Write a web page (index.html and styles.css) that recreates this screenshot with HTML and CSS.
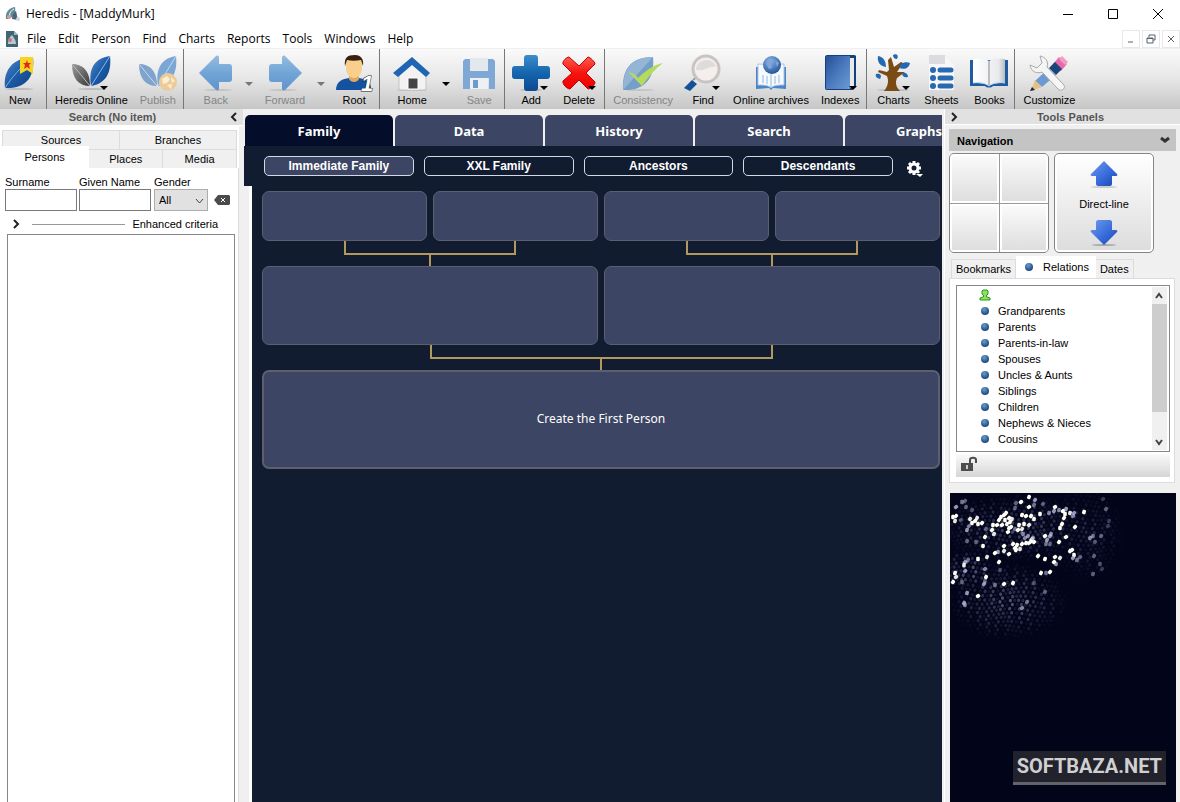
FILE: index.html
```html
<!DOCTYPE html>
<html lang="en">
<head>
    <meta charset="UTF-8">
    <meta name="viewport" content="width=device-width, initial-scale=1.0">
    <title>Heredis - [MaddyMurk]</title>
    <link rel="stylesheet" href="styles.css">
</head>
<body>
    <!-- shared gradients and shapes -->
    <svg class="defs" width="0" height="0">
        <defs>
            <linearGradient id="blue" x1="0" y1="0" x2="1" y2="1"><stop offset="0" stop-color="#4f8ccb"/><stop offset=".5" stop-color="#1d5ba6"/><stop offset="1" stop-color="#0d3f80"/></linearGradient>
            <linearGradient id="book" x1="0" y1="0" x2="1" y2="1"><stop offset="0" stop-color="#284f94"/><stop offset=".5" stop-color="#4a79bd"/><stop offset="1" stop-color="#6d9ad4"/></linearGradient>
            <linearGradient id="arrow" x1="0" y1="0" x2="0" y2="1"><stop offset="0" stop-color="#94bce2"/><stop offset=".5" stop-color="#72a5d6"/><stop offset="1" stop-color="#5f94cb"/></linearGradient>
            <linearGradient id="grey" x1="0" y1="0" x2="1" y2="1"><stop offset="0" stop-color="#9b9b9b"/><stop offset="1" stop-color="#3a3a3a"/></linearGradient>
            <linearGradient id="red" x1="0" y1="0" x2="0" y2="1"><stop offset="0" stop-color="#ff5a50"/><stop offset=".5" stop-color="#f5150f"/><stop offset="1" stop-color="#e00"/></linearGradient>
            <linearGradient id="plus" x1="0" y1="0" x2="0" y2="1"><stop offset="0" stop-color="#3d8ccb"/><stop offset=".5" stop-color="#1565ae"/><stop offset="1" stop-color="#0a4a90"/></linearGradient>
            <linearGradient id="paper" x1="0" y1="0" x2="1" y2="0"><stop offset="0" stop-color="#fff"/><stop offset=".8" stop-color="#e8eaec"/><stop offset="1" stop-color="#b9bdc2"/></linearGradient>
            <linearGradient id="nav" x1="0" y1="0" x2="1" y2="1"><stop offset="0" stop-color="#6f9cf0"/><stop offset=".6" stop-color="#3468d8"/><stop offset="1" stop-color="#1c44a8"/></linearGradient>
            <radialGradient id="globe" cx=".4" cy=".3" r=".8"><stop offset="0" stop-color="#8fb6ea"/><stop offset="1" stop-color="#14488f"/></radialGradient>
        </defs>
    </svg>

    <header class="titlebar">
        <svg class="app-icon" viewBox="0 0 16 16"><path d="M1 13C0 7 3 2 10 1c1 6-1 10-7 12z" fill="#5f8f95"/><path d="M5 12c-1-4 0-7 4-9" stroke="#fff" fill="none"/><path d="M7 13c0-4 2-7 4-8l2 9z" fill="#4b6479"/><circle cx="4" cy="11" r="2" fill="#d79b9b"/><circle cx="13" cy="13" r="2" fill="#cdd9dd"/></svg>
        <h1 class="title">Heredis - [MaddyMurk]</h1>
        <div class="window-controls">
            <button aria-label="Minimize"><svg viewBox="0 0 12 12"><path d="M1 6.500h10"/></svg></button>
            <button aria-label="Maximize"><svg viewBox="0 0 12 12"><path d="M1.500 1.500h9v9h-9z"/></svg></button>
            <button aria-label="Close"><svg viewBox="0 0 12 12"><path d="M1 1l10 10M11 1L1 11"/></svg></button>
        </div>
    </header>

    <nav class="menubar">
        <svg class="doc-icon" viewBox="0 0 14 16"><path d="M1 0h8l4 4v12H1z" fill="#3f6672"/><path d="M9 0l4 4H9z" fill="#9dbcc0"/><path d="M3 13c0-4 1-7 4-9 2 3 4 5 4 9z" fill="#b9c7d3"/><circle cx="5" cy="9" r="2" fill="#cf7b7b"/></svg>
        <button>File</button>
        <button>Edit</button>
        <button>Person</button>
        <button>Find</button>
        <button>Charts</button>
        <button>Reports</button>
        <button>Tools</button>
        <button>Windows</button>
        <button>Help</button>
        <div class="mdi-controls">
            <button aria-label="Minimize document"><svg viewBox="0 0 10 10"><path d="M2 8h5"/></svg></button>
            <button aria-label="Restore document"><svg viewBox="0 0 10 10"><path d="M3 3V1h6v5H7M1 4h6v5H1zM1 4.500h6"/></svg></button>
            <button aria-label="Close document"><svg viewBox="0 0 10 10"><path d="M2 2l6 6M8 2L2 8"/></svg></button>
        </div>
    </nav>

    <div class="toolbar">
        <div class="group group-first">
            <button class="tool">
                <svg viewBox="0 0 36 36"><ellipse cx="17" cy="34" rx="14" ry="1" fill="#bbb"/><path d="M3 33C1 17 9 3 31 2c2 19-6 32-28 31z" fill="url(#blue)"/><path d="M3 33C10 22 18 13 31 2" stroke="#7fb0e0" fill="none"/><path d="M18 2h13v17l-6-4-7 4z" fill="#f8d51c"/><path d="M25 5l1 3h3l-2 2 1 4-3-2-3 2 1-4-2-2h3z" fill="#e0262c"/></svg>
                New
            </button>
        </div>
        <div class="group">
            <button class="tool">
                <svg viewBox="0 0 36 36"><ellipse cx="19" cy="34" rx="14" ry="1" fill="#bbb"/><path d="M-1 9c10 0 18 6 18 22C6 31-1 24-1 9z" fill="url(#grey)"/><path d="M-1 9l18 22" stroke="#bbb"/><path d="M18 31C15 13 22 3 37 1c2 17-5 28-19 30z" fill="url(#blue)"/><path d="M18 31L37 1" stroke="#8cb9e6"/></svg>
                Heredis Online
                <i class="caret caret-over"></i>
            </button>
            <button class="tool" disabled>
                <svg viewBox="0 0 36 36"><path d="M-1 9c10 0 18 6 18 22C6 31-1 24-1 9z" fill="#7fa3cc"/><path d="M-1 9l18 22" stroke="#c5d8ec"/><path d="M18 31C15 13 22 3 36 1c2 17-5 28-18 30z" fill="#7ba7d5"/><path d="M18 31L36 1" stroke="#c5d8ec"/><circle cx="28" cy="27" r="9" fill="#eccb98"/><path d="M22 24l5-3 3 3-3 4-4 1zM31 22l4 4-3 2zM27 30l5-1-1 5z" fill="#f9edd5"/></svg>
                Publish
            </button>
        </div>
        <div class="group group-wide">
            <button class="tool" disabled>
                <svg viewBox="0 0 36 36"><ellipse cx="20" cy="35" rx="14" ry="1" fill="#c4c4c4"/><path d="M1 18L18 1c2-1 3 0 3 2v6h10c2 0 3 1 3 3v12c0 2-1 3-3 3H21v6c0 2-1 3-3 2z" fill="url(#arrow)"/></svg>
                Back
            </button>
            <button class="drop" aria-label="Back history" disabled><i class="caret"></i></button>
            <button class="tool" disabled>
                <svg viewBox="0 0 36 36"><ellipse cx="16" cy="35" rx="14" ry="1" fill="#c4c4c4"/><path d="M35 18L18 1c-2-1-3 0-3 2v6H5c-2 0-3 1-3 3v12c0 2 1 3 3 3h10v6c0 2 1 3 3 2z" fill="url(#arrow)"/></svg>
                Forward
            </button>
            <button class="drop" aria-label="Forward history" disabled><i class="caret"></i></button>
            <button class="tool">
                <svg viewBox="0 0 36 36"><path d="M0 35c0-9 7-11 13-12h10c7 1 13 4 12 12z" fill="#1452a0"/><path d="M13 18h10v6c-2 4-8 4-10 0z" fill="#e0a95e"/><path d="M10 6c0-4 16-4 16 0v7c0 6-4 10-8 10s-8-4-8-10z" fill="#f9cf8c"/><path d="M9 11C8 3 11 0 19 0c6 0 9 4 8 11l-2-6c-5 1-10 1-14 0z" fill="#3a2010"/><text x="25" y="36" class="root-number">1</text></svg>
                Root
            </button>
        </div>
        <div class="group group-wide">
            <button class="tool">
                <svg viewBox="0 0 36 36"><ellipse cx="18" cy="35" rx="15" ry="1" fill="#bbb"/><path d="M5 18L18 7l14 11v14c0 2-1 3-3 3H8c-2 0-3-1-3-3z" fill="#f2f2f2" stroke="#c6c6c6"/><path d="M14 23h10v11H14z" fill="#444" stroke="#fff"/><path d="M18 2L36 18l-4 4L18 10 4 22l-5-4z" fill="#1f65b3"/></svg>
                Home
            </button>
            <button class="drop" aria-label="Home pages"><i class="caret"></i></button>
            <button class="tool" disabled>
                <svg viewBox="0 0 36 36"><path d="M2 6l2-2h5v12h18V4h5l2 2v28h-6V23H9v11H2z" fill="#7fa9d4"/><path d="M9 3h18v13H9z" fill="#e3e8ee"/><path d="M9 23h18v11H9z" fill="#edf1f5"/><path d="M12 25h5v8h-5z" fill="#6d9aca"/></svg>
                Save
            </button>
        </div>
        <div class="group">
            <button class="tool">
                <svg viewBox="0 0 36 36"><ellipse cx="18" cy="35" rx="11" ry="1" fill="#bbb"/><path d="M14 0h8c2 0 3 1 3 3v8h9c2 0 3 1 3 3v7c0 2-1 3-3 3h-9v9c0 2-1 3-3 3h-8c-2 0-3-1-3-3v-9H2c-2 0-3-1-3-3v-7c0-2 1-3 3-3h9V3c0-2 1-3 3-3z" fill="url(#plus)"/></svg>
                Add
                <i class="caret caret-over"></i>
            </button>
            <button class="tool">
                <svg viewBox="0 0 36 36"><path d="M8 2l10 9 9-9c2 0 7 5 7 7l-9 9 9 9c0 3-4 7-7 7l-9-9-9 9c-3 0-8-5-7-8l9-8-9-9C1 6 6 2 8 2z" fill="url(#red)" stroke="#c40000"/></svg>
                Delete
                <i class="caret caret-over"></i>
            </button>
        </div>
        <div class="group">
            <button class="tool" disabled>
                <svg viewBox="0 0 36 36"><ellipse cx="15" cy="35" rx="14" ry="1" fill="#c4c4c4"/><path d="M-2 35C-3 16 4 2 28 2c2 20-7 34-30 33z" fill="#759fc9"/><path d="M-2 35L28 2C8 2-2 12-2 35z" fill="#95b5d4"/><path d="M4 18c3-1 6 1 9 5C19 17 28 10 38 8 30 14 23 22 17 31 12 26 9 22 4 18z" fill="#b6da5c"/></svg>
                Consistency
            </button>
            <button class="tool">
                <svg viewBox="0 0 36 36"><path d="M7 25l5 4-7 7-6-3z" fill="#155098"/><path d="M8 25l6-5" stroke="#999" stroke-width="2"/><circle cx="21" cy="14" r="13" fill="#f4efed" stroke="#c9c3c1" stroke-width="3"/><path d="M11 15c0-11 17-14 20-3-7-2-12 5-20 3z" fill="#dedbdc"/></svg>
                Find
                <i class="caret caret-over"></i>
            </button>
            <button class="tool">
                <svg viewBox="0 0 36 36"><path d="M3 12h30v22l-13-1-2 2-2-2-13 1z" fill="#4c85c6"/><path d="M5 9c6 0 10 1 13 4 3-3 7-4 13-4v21c-6 0-10 0-13 3-3-3-7-3-13-3z" fill="#f7fafd" stroke="#a9c6e6"/><path d="M18 13v20M10 20v8M14 21v8M22 21v8M26 20v8" stroke="#91b6df"/><circle cx="19" cy="10" r="9" fill="url(#globe)"/><path d="M13 8l5-4 3 2-3 3 1 4-3 1zM22 5l4 3-2 4z" fill="#7ea6d8"/></svg>
                Online archives
            </button>
            <button class="tool">
                <svg viewBox="0 0 36 36"><path d="M5 0h27c2 0 2 1 2 2v30l-4 3H5c-2 0-2-1-2-3V2c0-1 1-2 2-2z" fill="#173f80"/><path d="M28 3h4v28l-4 2z" fill="#e9e9e9"/><path d="M4 1h24v33H4z" fill="url(#book)"/></svg>
                Indexes
                <i class="caret caret-over"></i>
            </button>
        </div>
        <div class="group">
            <button class="tool">
                <svg viewBox="0 0 36 36"><ellipse cx="18" cy="35" rx="16" ry="1" fill="#bbb"/><path d="M9 36c4-5 5-10 3-15L3 17l1-2 8 2 2-2-1-10 3-3 3 10 7-5 2 1-6 9 8 0-8 6c-2 5-1 9 3 13z" fill="#7a4b12"/><path d="M3 1c6 1 8 6 8 11C5 11 2 7 3 1zM35 8c-1 5-5 7-11 5 1-5 6-7 11-5zM18 0c4-2 6 1 4 4-3 0-4-2-4-4zM1 19c5-1 6 2 4 5-3-1-5-2-4-5zM27 18c4-1 6 1 6 4-4 1-6-1-6-4z" fill="#2367b5"/></svg>
                Charts
                <i class="caret caret-over"></i>
            </button>
            <button class="tool">
                <svg viewBox="0 0 36 36"><path d="M6 0h16l9 9v26H6z" fill="#f7f7f9"/><path d="M6 0h16l9 9H6z" fill="#dcdce0"/><path d="M22 0l9 9h-9z" fill="#f7f7f9"/><circle cx="10" cy="15" r="3" fill="#2869b0"/><circle cx="10" cy="23" r="3" fill="#2869b0"/><circle cx="10" cy="31" r="3" fill="#2869b0"/><path d="M17 15h11M17 23h11M17 31h11" stroke="#2869b0" stroke-width="5" stroke-linecap="round"/></svg>
                Sheets
            </button>
            <button class="tool">
                <svg viewBox="0 0 36 36"><path d="M-1 5h38v26H22c-2 2-6 2-8 0H-1z" fill="#1f5c9f"/><path d="M2 4c7-1 12-1 16 2 4-3 9-3 16-2v24c-7 0-12 0-16 3-4-3-9-3-16-3z" fill="url(#paper)"/><path d="M18 6v25" stroke="#888"/><path d="M2 28c7-1 12 0 16 3 4-3 9-4 16-3" stroke="#b7d1ec" fill="none"/></svg>
                Books
            </button>
        </div>
        <div class="group">
            <button class="tool">
                <svg viewBox="0 0 36 36"><path d="M28 2l8 7-6 7-8-7z" fill="#e96aa8"/><path d="M31 1l6 6-3 3-6-6z" fill="#f49ac4"/><path d="M24 7l7 7-6 6-7-7z" fill="#1b4479"/><path d="M18 13l7 7-14 12-7-6z" fill="#6b9ad3"/><path d="M4 25l7 7-11 4z" fill="#e4bf86"/><path d="M1 32l3 3-5 1z" fill="#222"/><path d="M9 1c5 1 9 5 7 11l17 18c2 4-3 7-6 4L11 17C6 19 0 17-1 10l7 3 5-5z" fill="#f5f5f5" stroke="#a9a9a9"/></svg>
                Customize
            </button>
        </div>
    </div>

    <div class="workspace">
        <aside class="search-panel">
            <div class="panel-header">
                <h2>Search (No item)</h2>
                <button class="chevron" aria-label="Collapse search"><svg viewBox="0 0 8 10"><path d="M6 1L2 5l4 4"/></svg></button>
            </div>
            <div class="tab-row tab-row-back">
                <button class="tab">Sources</button>
                <button class="tab">Branches</button>
            </div>
            <div class="tab-row">
                <button class="tab tab-active">Persons</button>
                <button class="tab">Places</button>
                <button class="tab">Media</button>
            </div>
            <div class="search-body">
                <form class="fields">
                    <div class="field">
                        <label for="surname">Surname</label>
                        <input type="text" id="surname">
                    </div>
                    <div class="field">
                        <label for="given">Given Name</label>
                        <input type="text" id="given">
                    </div>
                    <div class="field field-gender">
                        <label for="gender">Gender</label>
                        <div class="select-box">
                            <select id="gender"><option>All</option></select>
                            <svg viewBox="0 0 9 6"><path d="M1 1l3.500 4L8 1"/></svg>
                        </div>
                    </div>
                    <button type="reset" class="clear" aria-label="Clear"><svg viewBox="0 0 16 12"><path d="M0 6l4-5h11l1 1v8l-1 1H4z" fill="#4b4b4b"/><path d="M7 4l4 4M11 4L7 8" stroke="#fff"/></svg></button>
                </form>
                <div class="enhanced">
                    <button class="chevron" aria-label="Show enhanced criteria"><svg viewBox="0 0 8 10"><path d="M2 1l4 4-4 4"/></svg></button>
                    <span class="rule"></span>
                    <span>Enhanced criteria</span>
                </div>
                <div class="results"></div>
            </div>
        </aside>

        <main class="center">
            <div class="main-tabs">
                <button class="main-tab main-tab-active">Family</button>
                <button class="main-tab">Data</button>
                <button class="main-tab">History</button>
                <button class="main-tab">Search</button>
                <button class="main-tab">Graphs</button>
            </div>
            <div class="view-bar">
                <button class="view view-active">Immediate Family</button>
                <button class="view">XXL Family</button>
                <button class="view">Ancestors</button>
                <button class="view">Descendants</button>
                <button class="gear" aria-label="View options">
                    <svg viewBox="0 0 18 18"><circle cx="7" cy="7" r="4" fill="none" stroke="#fff" stroke-width="3"/><path d="M7 0v3M7 11v3M0 7h3M11 7h3M2 2l2 2M10 10l2 2M2 12l2-2M10 4l2-2" stroke="#fff" stroke-width="3"/><path d="M9 13h7l-3 3z" fill="#fff" stroke="#121c31" stroke-width="1" paint-order="stroke"/></svg>
                </button>
            </div>
            <div class="tree">
                <div class="couples">
                    <div class="branch">
                        <div class="couple">
                            <div class="card card-small"></div>
                            <div class="card card-small"></div>
                        </div>
                        <div class="link"></div>
                        <div class="stem"></div>
                        <div class="card card-medium"></div>
                    </div>
                    <div class="branch">
                        <div class="couple">
                            <div class="card card-small"></div>
                            <div class="card card-small"></div>
                        </div>
                        <div class="link"></div>
                        <div class="stem"></div>
                        <div class="card card-medium"></div>
                    </div>
                </div>
                <div class="link"></div>
                <div class="stem"></div>
                <button class="card card-root">Create the First Person</button>
            </div>
        </main>

        <aside class="tools-panel">
            <div class="panel-header">
                <button class="chevron" aria-label="Collapse tools"><svg viewBox="0 0 8 10"><path d="M2 1l4 4-4 4"/></svg></button>
                <h2>Tools Panels</h2>
            </div>
            <div class="tools-body">
                <div class="section-title">
                    <h3>Navigation</h3>
                    <svg viewBox="0 0 10 8"><path d="M1 2l4 3 4-3"/></svg>
                </div>
                <div class="pads">
                    <div class="pad pad-grid">
                        <span></span><span></span><span></span><span></span>
                    </div>
                    <div class="pad pad-line">
                        <button aria-label="Up"><svg viewBox="0 0 28 28"><ellipse cx="14" cy="27" rx="13" ry="1" fill="#ccc"/><path d="M14 1l13 13c1 1 0 2-1 2h-4v8c0 1-1 2-2 2H8c-1 0-2-1-2-2v-8H2c-1 0-2-1-1-2z" fill="url(#nav)"/></svg></button>
                        <span>Direct-line</span>
                        <button aria-label="Down"><svg viewBox="0 0 28 28"><ellipse cx="14" cy="26" rx="12" ry="1" fill="#aaa"/><path d="M14 26L1 13c-1-1 0-2 1-2h4V3c0-1 1-2 2-2h12c1 0 2 1 2 2v8h4c1 0 2 1 1 2z" fill="url(#nav)"/></svg></button>
                    </div>
                </div>
                <div class="tab-row tools-tabs">
                    <button class="tab">Bookmarks</button>
                    <button class="tab tab-active"><i class="dot"></i>Relations</button>
                    <button class="tab">Dates</button>
                </div>
                <div class="relations">
                    <div class="relations-box">
                        <ul>
                            <li><svg class="person" viewBox="0 0 12 12"><path d="M1 11V9l3-1 1-1-2-2V2l1-1h4l1 1v3L7 7l1 1 3 1v2z" fill="#8fe05a" stroke="#239a1e"/></svg></li>
                            <li><i class="dot"></i>Grandparents</li>
                            <li><i class="dot"></i>Parents</li>
                            <li><i class="dot"></i>Parents-in-law</li>
                            <li><i class="dot"></i>Spouses</li>
                            <li><i class="dot"></i>Uncles &amp; Aunts</li>
                            <li><i class="dot"></i>Siblings</li>
                            <li><i class="dot"></i>Children</li>
                            <li><i class="dot"></i>Nephews &amp; Nieces</li>
                            <li><i class="dot"></i>Cousins</li>
                        </ul>
                        <div class="scrollbar">
                            <button aria-label="Scroll up"><svg viewBox="0 0 10 8"><path d="M2 6l3-4 3 4"/></svg></button>
                            <span class="thumb"></span>
                            <button aria-label="Scroll down"><svg viewBox="0 0 10 8"><path d="M2 2l3 4 3-4"/></svg></button>
                        </div>
                    </div>
                    <div class="lock-bar">
                        <button aria-label="Lock"><svg viewBox="0 0 16 14"><path d="M0 6h12v8H0z" fill="#4d4d4d"/><path d="M9 7V3c0-3 6-3 6 0v3" fill="none" stroke="#4d4d4d" stroke-width="2"/><path d="M5 8h2v4H5z" fill="#ccc"/></svg></button>
                    </div>
                </div>
                <div class="banner">
                    <svg id="cells" viewBox="0 0 226 309" preserveAspectRatio="xMinYMin slice"></svg>
                    <span class="brand">SOFTBAZA.NET</span>
                </div>
            </div>
        </aside>
    </div>

    <script src="script.js"></script>
</body>
</html>
```

FILE: styles.css
```css
* {
    margin: 0;
    padding: 0;
    box-sizing: border-box;
}
body {
    display: flex;
    flex-direction: column;
    height: 100vh;
    overflow: hidden;
    background: #f0f0f0;
    color: #000;
    font-family: "Liberation Sans", Arial, sans-serif;
    font-size: 11px;
    line-height: 14px;
}
button, input, select {
    font: inherit;
    color: inherit;
}
button {
    border: none;
    background: none;
    white-space: nowrap;
}
svg {
    display: block;
    overflow: visible;
}
.defs {
    position: absolute;
}

/* title and menu */
.titlebar, .menubar {
    display: flex;
    align-items: center;
    background: #fff;
    font-family: "Open Sans", "Noto Sans", sans-serif;
    font-size: 12px;
    padding-left: 5px;
}
.titlebar {
    height: 27px;
    flex: none;
}
.app-icon {
    width: 16px;
    height: 16px;
    margin-right: 5px;
}
.title {
    font-size: 12px;
    font-weight: normal;
}
.window-controls {
    display: flex;
    margin-left: auto;
}
.window-controls button {
    width: 45px;
    height: 27px;
    display: flex;
    align-items: center;
    justify-content: center;
}
.window-controls svg {
    width: 12px;
    height: 12px;
    fill: none;
    stroke: #000;
}
.menubar {
    height: 22px;
    flex: none;
    padding-top: 2px;
    border-bottom: 1px solid #f0f0f0;
}
.doc-icon {
    width: 14px;
    height: 16px;
    margin-right: 2px;
}
.menubar > button {
    padding: 0 6px;
}
.mdi-controls {
    display: flex;
    gap: 2px;
    margin-left: auto;
}
.mdi-controls button {
    width: 18px;
    height: 18px;
    padding: 3px;
    border: 1px solid #e8e8e8;
}
.mdi-controls svg {
    width: 10px;
    height: 10px;
    fill: none;
    stroke: #56616c;
}

/* toolbar */
.toolbar {
    display: flex;
    flex: none;
    height: 60px;
    background: linear-gradient(#fafafa, #e6e6e6 50%, #c6c6c6);
}
.group {
    display: flex;
    padding: 0 1px 0 2px;
}
.group + .group {
    border-left: 1px solid #777;
}
.group-first {
    padding: 0 6px 0 0;
}
.group-first .tool {
    padding: 6px 2px 0;
}
.group-wide {
    padding-left: 8px;
}
.tool {
    position: relative;
    display: flex;
    flex-direction: column;
    align-items: center;
    gap: 2px;
    padding: 6px 6px 0;
}
.tool svg {
    width: 36px;
    height: 36px;
}
.tool:disabled {
    color: #858585;
}
.drop {
    width: 19px;
    padding-top: 10px;
}
.caret {
    display: block;
    width: 8px;
    margin: 0 auto;
    border: 4px solid transparent;
    border-top-color: #000;
    border-bottom: none;
}
.drop:disabled .caret {
    border-top-color: #777;
}
.caret-over {
    position: absolute;
    top: 37px;
    left: calc(50% + 9px);
}
.root-number {
    font: italic bold 22px "Liberation Sans", sans-serif;
    fill: #fff;
    stroke: #222;
    paint-order: stroke;
}

/* workspace */
.workspace {
    display: flex;
    flex: 1;
    min-height: 0;
}
.panel-header {
    display: flex;
    align-items: center;
    height: 17px;
    background: #e1e1e1;
    border-bottom: 1px solid #fff;
    color: #555;
}
.panel-header h2 {
    flex: 1;
    font-size: 11px;
    text-align: center;
}
.chevron {
    width: 18px;
    display: flex;
    justify-content: center;
}
.chevron svg {
    width: 8px;
    height: 10px;
    fill: none;
    stroke: #222;
    stroke-width: 2;
}
.tab-row {
    display: flex;
    align-items: flex-end;
}
.tab {
    height: 19px;
    background: #f0f0f0;
    border: 1px solid #dcdcdc;
    border-bottom: none;
}
.tab + .tab {
    border-left: none;
}
.tab-active {
    height: 22px;
    padding-bottom: 2px;
    background: #fff;
    border-color: #fff;
}

/* search panel */
.search-panel {
    display: flex;
    flex-direction: column;
    width: 239px;
    background: #fff;
}
.search-panel .panel-header {
    margin-right: -4px;
}
.search-panel .tab-row {
    padding-right: 2px;
    margin-top: -3px;
}
.search-panel .tab {
    flex: 5;
}
.search-panel .tab-active {
    flex: 6;
}
.search-panel .tab-row-back {
    margin-top: 4px;
    padding-left: 2px;
}
.search-body {
    display: flex;
    flex-direction: column;
    flex: 1;
    padding: 6px 3px 0 5px;
    border-right: 1px solid #dcdcdc;
}
.fields {
    display: flex;
    align-items: flex-end;
    gap: 2px;
    padding-right: 5px;
}
.field {
    flex: 4;
    min-width: 0;
}
.field-gender {
    flex: 3;
    margin: 0 4px 0 1px;
}
.field label {
    display: block;
    padding-top: 1px;
}
.field input {
    display: block;
    width: 100%;
    height: 22px;
    border: 1px solid #7a7a7a;
}
.select-box {
    position: relative;
}
.select-box select {
    display: block;
    width: 100%;
    height: 22px;
    padding-left: 4px;
    appearance: none;
    background: #e1e1e1;
    border: 1px solid #adadad;
}
.select-box svg {
    position: absolute;
    right: 4px;
    top: 9px;
    width: 9px;
    height: 6px;
    fill: none;
    stroke: #444;
    pointer-events: none;
}
.clear {
    height: 22px;
}
.clear svg {
    width: 16px;
    height: 12px;
}
.enhanced {
    display: flex;
    align-items: center;
    gap: 7px;
    padding: 6px 17px 3px 2px;
}
.rule {
    flex: 1;
    height: 1px;
    background: #999;
}
.results {
    flex: 1;
    margin-left: 2px;
    border: 1px solid #828790;
    border-bottom: none;
}

/* family view */
.center {
    display: flex;
    flex-direction: column;
    flex: 1;
    min-width: 0;
    margin: 6px 2px 0 5px;
}
.main-tabs {
    display: flex;
    gap: 2px;
    height: 31px;
    padding-left: 1px;
    overflow: hidden;
}
.main-tab {
    flex: none;
    width: 148px;
    border-radius: 5px 5px 0 0;
    background: #3c4563;
    color: #fff;
    font: bold 13px "Noto Sans", "Open Sans", sans-serif;
}
.main-tab-active {
    background: #040d2a;
}
.view-bar {
    display: flex;
    align-items: flex-start;
    gap: 10px;
    height: 40px;
    padding: 10px 17px 0 20px;
    background: #121c31;
    color: #fff;
}
.view {
    flex: 1;
    height: 20px;
    border: 1px solid #d4d9e4;
    border-radius: 5px;
    font-size: 12px;
    font-weight: bold;
}
.view-active {
    background: #3c4563;
}
.gear {
    padding: 5px 0 0 4px;
}
.gear svg {
    width: 18px;
    height: 18px;
}
.tree {
    flex: 1;
    margin-left: 5px;
    padding: 5px 2px 0 10px;
    background: #121c31;
    border-left: 3px solid #fff;
}
.couples, .couple {
    display: flex;
    gap: 6px;
}
.branch {
    flex: 1;
}
.card {
    display: block;
    flex: 1;
    width: 100%;
    background: #3c4563;
    border: 1px solid #5b5f6e;
    border-radius: 7px;
}
.card-small {
    height: 50px;
}
.card-medium {
    height: 79px;
}
.card-root {
    height: 99px;
    padding-bottom: 2px;
    border-width: 2px;
    color: #fff;
    font: 12px "Noto Sans", "Open Sans", sans-serif;
}
.link {
    width: calc(50% + 4px);
    height: 14px;
    margin: 0 auto;
    border: 2px solid #b3985d;
    border-top: none;
}
.stem {
    width: 2px;
    height: 11px;
    margin: 0 auto;
    background: #b3985d;
}

/* tools panel */
.tools-panel {
    display: flex;
    flex-direction: column;
    width: 236px;
    border-left: 1px solid #fff;
}
.tools-panel .panel-header {
    padding-right: 2px;
}
.tools-body {
    display: flex;
    flex-direction: column;
    flex: 1;
    padding: 4px 4px 0;
}
.section-title {
    display: flex;
    align-items: center;
    justify-content: space-between;
    height: 22px;
    padding: 0 6px 0 8px;
    background: #c4c4c4;
}
.section-title h3 {
    padding-top: 1px;
    font-size: 11px;
}
.section-title svg {
    width: 10px;
    height: 8px;
    fill: none;
    stroke: #333;
    stroke-width: 3;
}
.pads {
    display: flex;
    gap: 5px;
    padding-top: 2px;
}
.pad {
    width: 100px;
    height: 100px;
    border: 1px solid #858585;
    border-radius: 5px;
    background: #fff;
}
.pad-grid {
    display: grid;
    grid-template-columns: 1fr 1fr;
    gap: 1px;
    background: #999;
    overflow: hidden;
}
.pad-grid span {
    background: linear-gradient(#fafafa, #dedede);
    border: 2px solid #fff;
}
.pad-line {
    display: flex;
    flex-direction: column;
    align-items: center;
    justify-content: space-between;
    padding: 6px 0 5px;
    background: linear-gradient(#fff, #dcdcdc);
    box-shadow: inset 0 0 0 2px #fff;
}
.pad-line svg {
    width: 28px;
    height: 28px;
}
.tools-tabs {
    margin-top: 3px;
    padding-left: 2px;
}
.tools-tabs .tab {
    padding: 0 4px;
}
.tools-tabs .tab-active {
    display: flex;
    align-items: center;
    gap: 10px;
    padding: 0 6px 2px 9px;
}
.dot {
    display: inline-block;
    width: 8px;
    height: 8px;
    border-radius: 50%;
    background: radial-gradient(circle at 40% 30%, #6d9bd0, #1f4a86 70%);
}
.relations {
    margin-right: 1px;
    padding: 6px 4px 5px 6px;
    background: #fff;
    border: 1px solid #dcdcdc;
}
.relations-box {
    display: flex;
    justify-content: space-between;
    height: 167px;
    padding: 1px 2px 1px 24px;
    border: 1px solid #828790;
}
.relations-box li {
    display: flex;
    align-items: center;
    gap: 9px;
    height: 16px;
}
.person {
    width: 12px;
    height: 12px;
    margin-left: -2px;
}
.scrollbar {
    display: flex;
    flex-direction: column;
    width: 15px;
    background: #f0f0f0;
}
.scrollbar button {
    height: 17px;
    padding-left: 2px;
}
.scrollbar svg {
    width: 10px;
    height: 8px;
    fill: none;
    stroke: #444;
    stroke-width: 2;
}
.thumb {
    height: 108px;
    margin-bottom: auto;
    background: #cdcdcd;
}
.lock-bar {
    height: 23px;
    margin-top: 2px;
    padding: 3px 5px;
    background: linear-gradient(#fafafa, #d6d6d6);
}
.lock-bar svg {
    width: 16px;
    height: 14px;
}
.banner {
    position: relative;
    flex: 1;
    min-height: 0;
    margin: 10px 0 0 1px;
    background: #02041a;
    overflow: hidden;
}
.banner svg {
    width: 100%;
    height: 100%;
}
.brand {
    position: absolute;
    right: 10px;
    bottom: 17px;
    padding: 0 4px;
    background: #22222d;
    border-bottom: 3px solid #63636b;
    color: #d0d0d0;
    font: bold 20px/31px "Roboto", sans-serif;
}
```

FILE: script.js
```js
// lit cells: x, y, brightness
const lit = [
    [12,9,.6],[15,8,.5],[16,14,.5],[6,14,.8],[22,17,.4],[3,24,1],[6,23,1],[5,28,.9],[11,27,.4],
    [20,26,.9],[22,30,1],[25,28,1],[27,25,.9],[28,31,1],[32,30,1],[17,37,.8],[19,33,.6],
    [36,36,.5],[43,32,1],[42,37,1],[44,41,.9],[47,32,1],[49,27,1],[51,24,1],[54,22,1],[56,20,1],
    [55,27,1],[59,25,1],[57,31,1],[52,32,1],[60,29,1],[62,26,.9],[61,34,1],[59,35,1],[58,39,1],
    [65,36,.6],[69,32,1],[68,37,1],[72,36,.9],[74,31,1],[79,32,.9],[72,22,1],[76,23,1],[81,23,1],
    [84,26,1],[71,9,1],[79,4,1],[79,14,1],[85,7,.8],[65,15,.5],[66,10,.5],[84,12,.6],[90,21,1],
    [93,11,.5],[99,20,.7],[105,14,1],[104,18,.8],[109,17,.7],[113,18,1],[116,16,.8],[115,21,1],
    [114,25,1],[120,20,.9],[124,20,.8],[112,31,1],[110,35,1],[125,34,1],[134,19,1],[123,23,.7],
    [35,44,1],[33,53,1],[54,53,1],[17,48,.5],[26,49,.5],[63,51,1],[67,52,1],[65,55,1],[66,57,1],
    [70,56,.9],[72,51,1],[76,50,1],[79,50,1],[82,46,.9],[81,48,1],[84,49,1],[83,45,.7],
    [73,41,.7],[75,45,.7],[78,43,.7],[95,43,1],[97,47,.8],[96,51,.6],[100,43,.8],[101,41,.7],
    [116,44,1],[109,49,1],[100,51,.5],[122,57,1],[120,58,1],[124,62,1],[123,65,.8],[127,67,.6],
    [130,64,.5],[140,45,.7],[143,43,.6],[145,49,.4],[151,43,.5],[153,6,.3],[156,16,.5],[159,28,.3],
    [158,33,.3],[144,63,.5],[150,71,.4],[152,76,.3],[143,81,.5],[59,61,1],[54,58,.9],[48,59,.8],
    [45,60,1],[37,64,.9],[28,66,1],[49,69,1],[50,77,.4],[15,69,.8],[18,67,.6],[14,72,.9],[15,78,.7],
    [5,80,1],[6,84,.9],[3,89,1],[12,89,.5],[35,76,.7],[36,84,1],[35,88,.5],[34,91,.8],[45,92,.6],
    [54,91,1],[63,90,1],[84,90,.4],[88,63,1],[95,66,1],[105,64,1],[110,65,.9],[106,71,.8],
    [104,69,1],[91,80,1],[96,80,.6],[100,79,1],[17,100,.8],[28,103,1],[14,110,.8],[15,112,.7],
    [95,99,.5],[77,109,.6],[72,115,.7]
];

// soft areas where the unlit cells show through: x, y, rx, ry, strength
const glow = [
    [65, 35, 85, 35, .38],
    [18, 78, 28, 24, .5],
    [58, 108, 62, 40, .42],
    [135, 40, 42, 52, .2]
];

const svg = document.getElementById("cells");

function cell(x, y, w, h, color, opacity, angle) {
    const e = document.createElementNS("http://www.w3.org/2000/svg", "rect");
    e.setAttribute("x", x - w / 2);
    e.setAttribute("y", y - h / 2);
    e.setAttribute("width", w);
    e.setAttribute("height", h);
    e.setAttribute("rx", 1.3);
    e.setAttribute("fill", color);
    e.setAttribute("opacity", opacity);
    e.setAttribute("transform", `rotate(${angle} ${x} ${y})`);
    svg.appendChild(e);
}

for (let row = 0; row < 38; row++) {
    for (let col = 0; col < 40; col++) {
        const x = col * 4.6 + (row % 2) * 2.3 + Math.sin(row * 7 + col * 5) * 0.6;
        const y = row * 4.2 + Math.sin(col * 0.4 + row * 0.2) * 2;
        let light = 0;
        for (const [gx, gy, rx, ry, strength] of glow) {
            const d = Math.hypot((x - gx) / rx, (y - gy) / ry);
            light = Math.max(light, strength * (1 - d));
        }
        light *= 0.8 + 0.5 * Math.sin(row * 12.9 + col * 78.2);
        if (light > 0.01) {
            cell(x, y, 3, 3.4, "#9a9cd0", light.toFixed(2), 20);
        }
    }
}

lit.forEach(([x, y, light], i) => cell(x, y, 3.6, 4.4, light > 0.8 ? "#fffff4" : "#b9bbe0", light, (i * 37) % 60));
```
